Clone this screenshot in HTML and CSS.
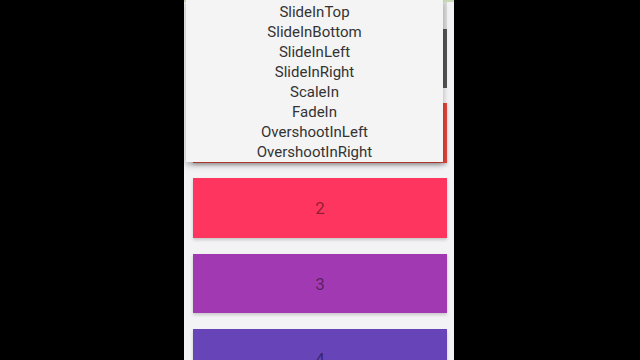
FILE: index.html
```html
<!DOCTYPE html>
<html>
<head>
<meta charset="utf-8">
<link rel="stylesheet" href="styles.css">
</head>
<body>
<div class="stage">
  <div class="phone">
    <div class="topline"></div>
    <div class="content">
      <div class="block light"></div>
      <div class="block dark"></div>
      <div class="card red"><span>1</span></div>
      <div class="card pink"><span>2</span></div>
      <div class="card purple"><span>3</span></div>
      <div class="card deep"><span>4</span></div>
    </div>
    <ul class="menu">
      <li>SlideInTop</li>
      <li>SlideInBottom</li>
      <li>SlideInLeft</li>
      <li>SlideInRight</li>
      <li>ScaleIn</li>
      <li>FadeIn</li>
      <li>OvershootInLeft</li>
      <li>OvershootInRight</li>
    </ul>
  </div>
</div>
</body>
</html>
```
FILE: styles.css
```css
html, body {
  margin: 0;
  padding: 0;
  width: 640px;
  height: 360px;
  overflow: hidden;
  background: #000;
  font-family: Roboto, "Noto Sans", sans-serif;
}
.stage {
  display: flex;
  justify-content: flex-start;
  padding-left: 184px;
  height: 360px;
}
.phone {
  position: relative;
  width: 270px;
  height: 360px;
  background: #f3f2f5;
  overflow: hidden;
  display: flex;
  flex-direction: column;
}
.topline {
  height: 2px;
  background: #c9dbb6;
  flex: none;
}
.content {
  display: flex;
  flex-direction: column;
  padding: 0 7px 0 9px;
}
.block {
  flex: none;
}
.block.light {
  height: 27px;
  background: #dcdcdc;
}
.block.dark {
  height: 59px;
  background: #555;
}
.card {
  flex: none;
  height: 60px;
  display: flex;
  align-items: center;
  justify-content: center;
  box-shadow: 0 2px 3px rgba(0,0,0,0.18);
  font-size: 17px;
  color: rgba(0,0,0,0.45);
}
.card.red {
  margin-top: 15px;
  background: #e0463a;
}
.card.pink {
  margin-top: 15px;
  background: #fe355e;
}
.card.purple {
  margin-top: 16px;
  height: 59px;
  background: #a13ab2;
}
.card.deep {
  margin-top: 16px;
  background: #6844b9;
}
.menu {
  position: absolute;
  left: 2px;
  top: 0;
  width: 257px;
  height: 162px;
  margin: 0;
  padding: 2px 0 0;
  list-style: none;
  background: #f4f4f4;
  box-shadow: 0 3px 6px rgba(0,0,0,0.3);
  box-sizing: border-box;
}
.menu li {
  height: 20px;
  line-height: 20px;
  text-align: center;
  font-size: 15px;
  color: #333;
}
```
